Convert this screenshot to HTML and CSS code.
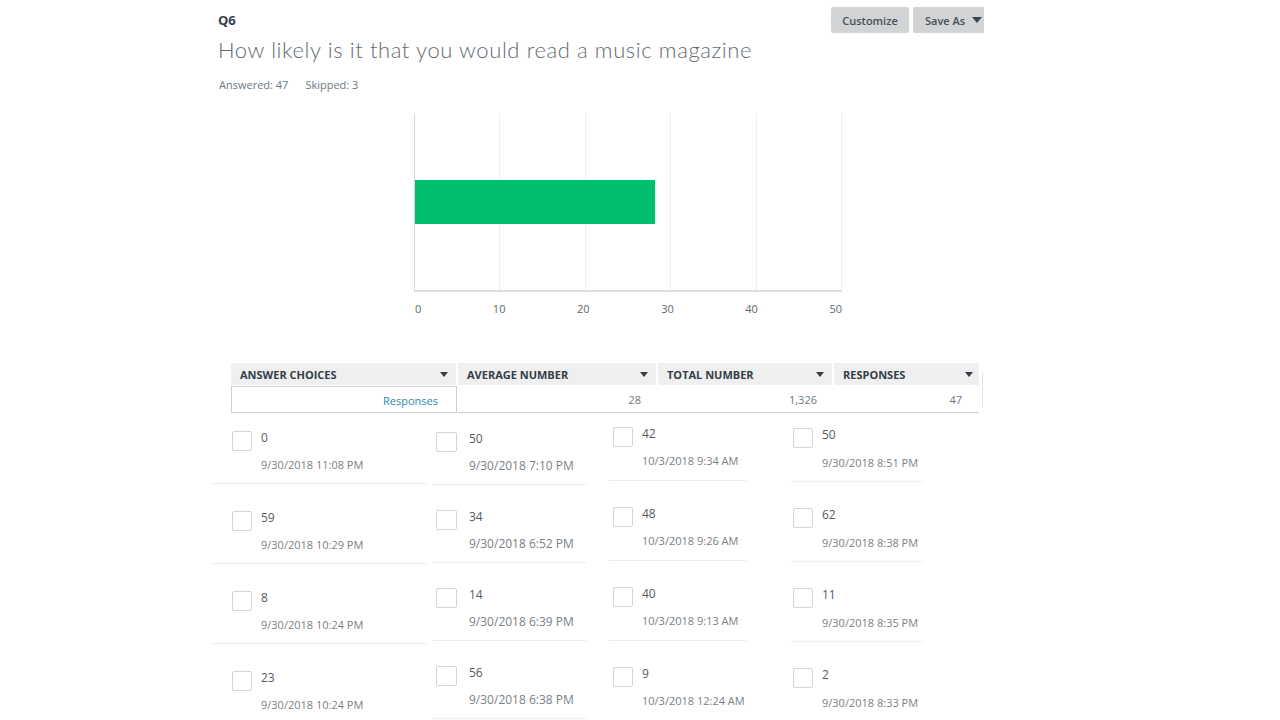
FILE: index.html
```html
<!DOCTYPE html>
<html lang="en">
<head>
<meta charset="utf-8">
<title>Q6 results</title>
<link rel="stylesheet" href="styles.css">
</head>
<body>
<div class="page">
  <div class="top">
    <div class="qnum">Q6</div>
    <div class="buttons">
      <button class="btn btn-customize">Customize</button>
      <button class="btn btn-save">Save As <span class="caret"></span></button>
    </div>
  </div>
  <h1 class="title">How likely is it that you would read a music magazine</h1>
  <div class="meta"><span>Answered: 47</span><span>Skipped: 3</span></div>

  <div class="chart">
    <div class="plot">
      <div class="grid-cell"></div>
      <div class="grid-cell"></div>
      <div class="grid-cell"></div>
      <div class="grid-cell"></div>
      <div class="grid-cell"></div>
      <div class="bar" style="width:56.2%"></div>
    </div>
    <div class="ticks">
      <span>0</span><span>10</span><span>20</span><span>30</span><span>40</span><span>50</span>
    </div>
  </div>

  <div class="table-wrap">
    <div class="table">
      <div class="thead">
        <div class="th">ANSWER CHOICES<span class="caret dark"></span></div>
        <div class="th">AVERAGE NUMBER<span class="caret dark"></span></div>
        <div class="th">TOTAL NUMBER<span class="caret dark"></span></div>
        <div class="th last">RESPONSES<span class="caret dark"></span></div>
      </div>
      <div class="trow">
        <div class="td first"><a class="link">Responses</a></div>
        <div class="td">28</div>
        <div class="td">1,326</div>
        <div class="td">47</div>
      </div>
    </div>
    <div class="edge"></div>
  </div>

  <div class="list">
    <div class="col col1">
      <div class="item"><span class="cb"></span><div class="txt"><div class="val">0</div><div class="date">9/30/2018 11:08 PM</div></div></div>
      <div class="item"><span class="cb"></span><div class="txt"><div class="val">59</div><div class="date">9/30/2018 10:29 PM</div></div></div>
      <div class="item"><span class="cb"></span><div class="txt"><div class="val">8</div><div class="date">9/30/2018 10:24 PM</div></div></div>
      <div class="item"><span class="cb"></span><div class="txt"><div class="val">23</div><div class="date">9/30/2018 10:24 PM</div></div></div>
    </div>
    <div class="col col2">
      <div class="item"><span class="cb"></span><div class="txt"><div class="val">50</div><div class="date">9/30/2018 7:10 PM</div></div></div>
      <div class="item"><span class="cb"></span><div class="txt"><div class="val">34</div><div class="date">9/30/2018 6:52 PM</div></div></div>
      <div class="item"><span class="cb"></span><div class="txt"><div class="val">14</div><div class="date">9/30/2018 6:39 PM</div></div></div>
      <div class="item"><span class="cb"></span><div class="txt"><div class="val">56</div><div class="date">9/30/2018 6:38 PM</div></div></div>
    </div>
    <div class="col col3">
      <div class="item"><span class="cb"></span><div class="txt"><div class="val">42</div><div class="date">10/3/2018 9:34 AM</div></div></div>
      <div class="item"><span class="cb"></span><div class="txt"><div class="val">48</div><div class="date">10/3/2018 9:26 AM</div></div></div>
      <div class="item"><span class="cb"></span><div class="txt"><div class="val">40</div><div class="date">10/3/2018 9:13 AM</div></div></div>
      <div class="item"><span class="cb"></span><div class="txt"><div class="val">9</div><div class="date">10/3/2018 12:24 AM</div></div></div>
    </div>
    <div class="col col4">
      <div class="item"><span class="cb"></span><div class="txt"><div class="val">50</div><div class="date">9/30/2018 8:51 PM</div></div></div>
      <div class="item"><span class="cb"></span><div class="txt"><div class="val">62</div><div class="date">9/30/2018 8:38 PM</div></div></div>
      <div class="item"><span class="cb"></span><div class="txt"><div class="val">11</div><div class="date">9/30/2018 8:35 PM</div></div></div>
      <div class="item"><span class="cb"></span><div class="txt"><div class="val">2</div><div class="date">9/30/2018 8:33 PM</div></div></div>
    </div>
  </div>
</div>
</body>
</html>
```

FILE: styles.css
```css
* { box-sizing: border-box; }
html, body { margin: 0; padding: 0; background: #fff; }
body {
  font-family: "Open Sans", "Liberation Sans", Arial, sans-serif;
  color: #333e48;
  width: 1280px;
  height: 720px;
  overflow: hidden;
}
.page {
  padding: 7px 0 0 218px;
  width: 984px;
}
.top {
  display: flex;
  justify-content: space-between;
  align-items: flex-start;
  width: 766px;
}
.qnum {
  font-weight: 700;
  font-size: 13px;
  line-height: 26px;
  color: #333e48;
}
.buttons { display: flex; gap: 4px; }
.btn {
  height: 26px;
  border: none;
  border-radius: 2px;
  background: #d1d3d4;
  color: #464f56;
  font-family: "Open Sans", "Liberation Sans", Arial, sans-serif;
  font-weight: 600;
  font-size: 11px;
  padding: 0;
  display: flex;
  align-items: center;
  justify-content: center;
}
.btn-customize { width: 78px; }
.btn-save { width: 71px; justify-content: flex-start; padding-left: 12px; gap: 7px; border-radius: 2px 0 0 2px; }
.caret {
  display: inline-block;
  width: 0; height: 0;
  border-left: 5px solid transparent;
  border-right: 5px solid transparent;
  border-top: 6px solid #3d464d;
}
.title {
  margin: 2px 0 0 0;
  font-family: Lato, "Open Sans", sans-serif;
  font-weight: 300;
  font-size: 22px;
  line-height: 30px;
  color: #5f6b72;
  letter-spacing: 0.6px;
}
.meta {
  margin-top: 13px;
  font-size: 11px;
  line-height: 14px;
  color: #6b787f;
  display: flex;
  gap: 17px;
  padding-left: 1px;
}
.chart {
  margin: 21px 0 0 196px;
  width: 428px;
}
.plot {
  position: relative;
  height: 179px;
  border-left: 1px solid #d6d6d6;
  border-bottom: 2px solid #dedede;
  display: flex;
}
.grid-cell {
  flex: 1;
  border-right: 1px solid #eeeeee;
}
.bar {
  position: absolute;
  left: 0;
  top: 67px;
  height: 44px;
  background: #00bf6f;
}
.ticks {
  margin-top: 10px;
  display: flex;
  justify-content: space-between;
  font-size: 11px;
  line-height: 14px;
  color: #60686e;
  padding-left: 1px;
}
.table-wrap {
  margin: 47px 0 0 13px;
  display: flex;
  align-items: flex-start;
}
.table { width: 748px; }
.thead, .trow {
  display: grid;
  grid-template-columns: 227px 200px 176px 145px;
}
.th {
  height: 22px;
  background: #efefef;
  border-right: 2px solid #fff;
  font-weight: 700;
  font-size: 11px;
  color: #333e48;
  display: flex;
  align-items: center;
  justify-content: space-between;
  padding: 0 8px 0 9px;
}
.th.last { border-right: none; padding-right: 6px; }
.caret.dark { border-left-width: 4px; border-right-width: 4px; border-top-width: 5px; border-top-color: #333e48; }
.trow { margin-top: 1px; }
.td {
  height: 27px;
  border-bottom: 1px solid #cfcfcf;
  font-size: 11px;
  color: #6b787f;
  display: flex;
  align-items: center;
  justify-content: flex-end;
  padding-right: 17px;
  padding-top: 1px;
}
.td.first {
  border: 1px solid #cfcfcf;
  width: 226px;
  padding-right: 18px;
}
.link { color: #2a8ab0; }
.edge {
  width: 1px;
  height: 35px;
  margin: 9px 0 0 3px;
  background: #e2e2e2;
}
.list {
  display: flex;
  align-items: flex-start;
  margin-left: -6px;
}
.col { display: flex; flex-direction: column; }
.item {
  display: flex;
  align-items: flex-start;
  border-bottom: 1px solid #ececec;
  padding-bottom: 11px;
}
.cb {
  flex: none;
  width: 20px;
  height: 20px;
  margin-top: 0;
  border: 1px solid #d4d4d4;
  border-radius: 2px;
  background: #fff;
}
.txt { margin-left: 9px; }
.val {
  font-size: 12px;
  line-height: 14px;
  color: #555b60;
}
.date {
  margin-top: 13px;
  font-size: 11px;
  line-height: 14px;
  color: #7a8186;
}
.col1 { width: 215px; padding-top: 18px; }
.col1 .item { padding-left: 20px; }
.col1 .item + .item { margin-top: 27px; }
.col2 { width: 153px; margin-left: 6px; padding-top: 19px; }
.col2 .item { padding-left: 3px; }
.col2 .item + .item { margin-top: 25px; }
.col2 .cb { width: 21px; }
.col2 .txt { margin-left: 12px; }
.col2 .date { font-size: 12px; }
.col3 { width: 137px; margin-left: 23px; padding-top: 14px; }
.col3 .item { padding-left: 4px; padding-bottom: 12px; }
.col3 .item + .item { margin-top: 26px; }
.col4 { width: 131px; margin-left: 45px; padding-top: 15px; }
.col4 .item { padding-left: 2px; }
.col4 .date { margin-top: 14px; }
.col4 .item + .item { margin-top: 26px; }
```
